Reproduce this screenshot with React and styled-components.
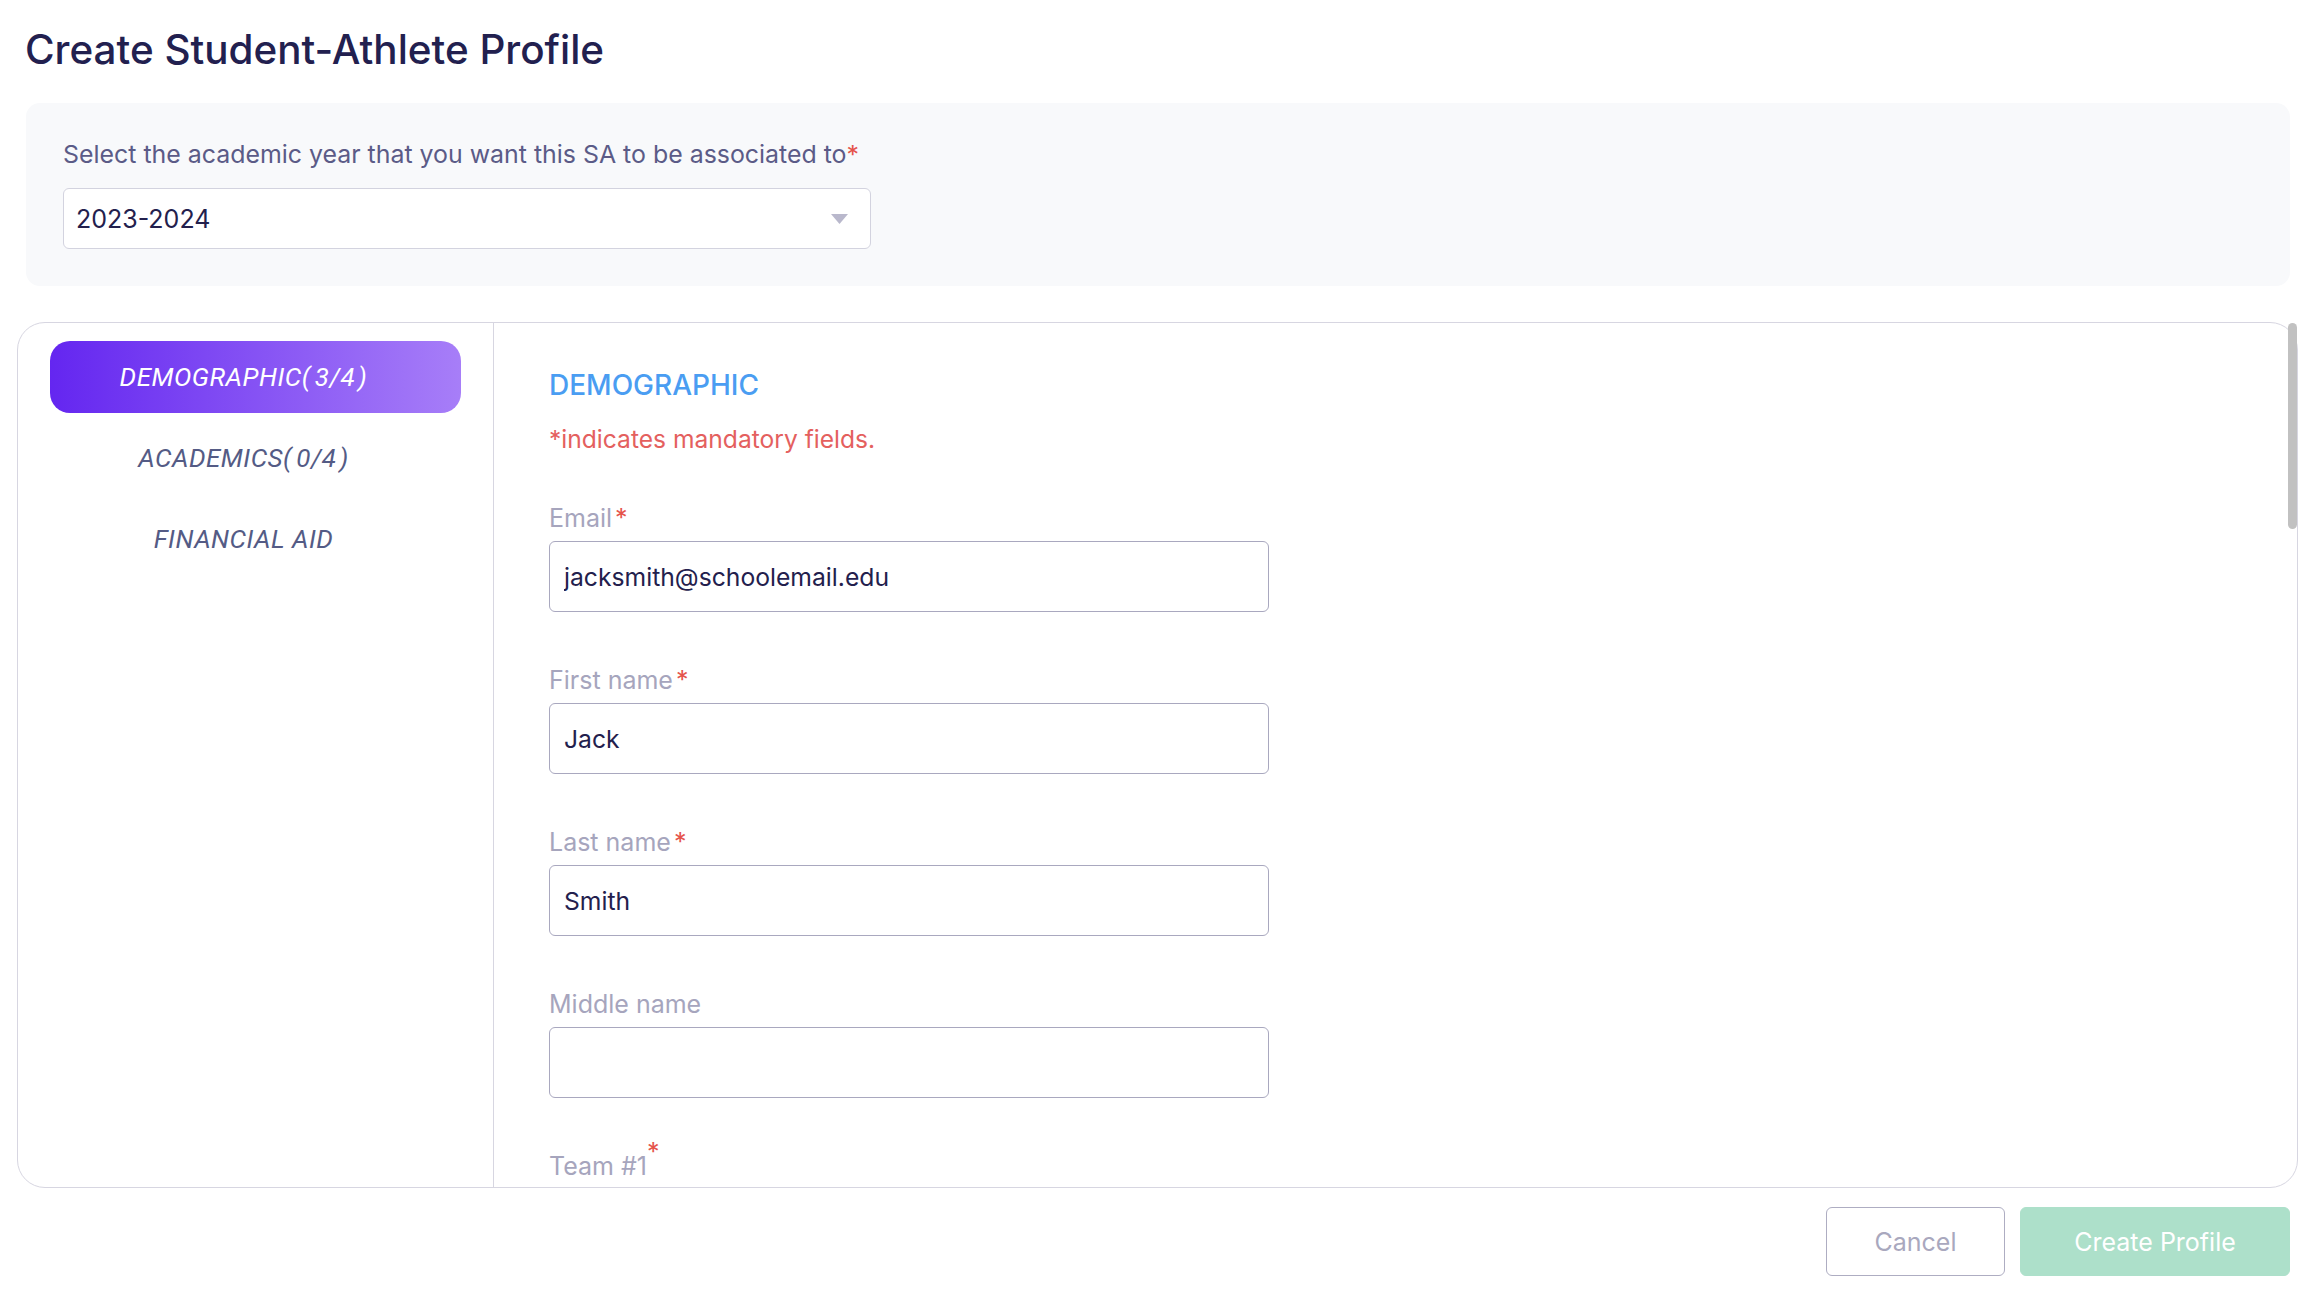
import styled, { createGlobalStyle } from "styled-components";

const GlobalStyle = createGlobalStyle`
  * { box-sizing: border-box; }
  body {
    margin: 0;
    background: #ffffff;
    font-family: Inter, "Noto Sans", sans-serif;
  }
`;

const Page = styled.div`
  height: 100vh;
  overflow: hidden;
  display: flex;
  flex-direction: column;
  padding-top: 25px;
`;

const Title = styled.h1`
  margin: 0 0 28px 25px;
  font-size: 40.4px;
  line-height: 50px;
  font-weight: 500;
  color: #22204f;
`;

const YearPanel = styled.div`
  margin: 0 34px 36px 26px;
  padding: 36px 37px 37px;
  background: #f8f9fb;
  border-radius: 14px;
`;

const PanelLabel = styled.div`
  font-size: 24.9px;
  line-height: 30px;
  color: #5b5b87;
  margin-bottom: 19px;
`;

const Star = styled.span`
  color: #e5534b;
  margin-left: ${(p) => (p.tight ? "0" : "3px")};
  position: ${(p) => (p.raised ? "relative" : "static")};
  top: ${(p) => (p.raised ? "-14px" : "0")};
`;

const SelectBox = styled.div`
  width: 808px;
  height: 61px;
  background: #ffffff;
  border: 1px solid #d3d3df;
  border-radius: 6px;
  display: flex;
  align-items: center;
  justify-content: space-between;
  padding: 0 22px 0 12px;
  font-size: 25px;
  color: #23204d;
`;

const Card = styled.div`
  position: relative;
  margin: 0 26px 0 17px;
  height: 866px;
  border: 1px solid #d7d6e1;
  border-radius: 28px;
  display: flex;
`;

const Sidebar = styled.nav`
  width: 476px;
  flex-shrink: 0;
  border-right: 1px solid #d7d6e1;
  padding: 18px 32px;
  display: flex;
  flex-direction: column;
  gap: 9px;
`;

const Tab = styled.div`
  height: 72px;
  border-radius: 20px;
  display: flex;
  align-items: center;
  justify-content: center;
  padding-right: 24px;
  font-family: Roboto, "Liberation Sans", sans-serif;
  font-style: italic;
  font-size: 26px;
  letter-spacing: 0.5px;
  color: ${(p) => (p.active ? "#ffffff" : "#545b85")};
  background: ${(p) =>
    p.active ? "linear-gradient(90deg, #6426f0 0%, #a77ef8 100%)" : "transparent"};
`;

const Count = styled.span`
  padding: 0 3px 0 4px;
`;

const Pane = styled.div`
  flex: 1;
  height: 100%;
  overflow: hidden;
  padding: 45px 56px 50px 55px;
  border-radius: 0 28px 28px 0;
`;

const ScrollThumb = styled.div`
  position: absolute;
  top: 0;
  right: 0;
  width: 9px;
  height: 206px;
  border-radius: 5px;
  background: #c1c1c1;
`;

const SectionTitle = styled.h2`
  margin: 0 0 22px;
  font-size: 28px;
  line-height: 34px;
  font-weight: 500;
  color: #4a9df2;
`;

const Mandatory = styled.p`
  margin: 0 0 49px;
  font-size: 24.6px;
  line-height: 30px;
  color: #e4605e;
`;

const Field = styled.div`
  margin-bottom: 53px;
`;

const Label = styled.label`
  display: block;
  font-size: 25px;
  line-height: 30px;
  color: #a6a5bd;
  margin-bottom: 8px;
`;

const Input = styled.input`
  display: block;
  width: 720px;
  height: 71px;
  border: 1px solid #a9a8bf;
  border-radius: 6px;
  padding: 0 14px;
  font-family: inherit;
  font-size: 24.7px;
  color: #23204d;
  background: #ffffff;
  outline: none;
`;

const Footer = styled.div`
  display: flex;
  justify-content: flex-end;
  gap: 15px;
  margin: 19px 34px 0 0;
`;

const Button = styled.button`
  height: 69px;
  width: ${(p) => (p.primary ? "270px" : "179px")};
  border-radius: 6px;
  border: 1px solid ${(p) => (p.primary ? "#ade0ca" : "#aeadc2")};
  background: ${(p) => (p.primary ? "#ade0ca" : "#ffffff")};
  color: ${(p) => (p.primary ? "#ffffff" : "#a9a8be")};
  font-family: inherit;
  font-size: 25px;
  cursor: pointer;
`;

const Caret = () => (
  <svg width="17" height="10" viewBox="0 0 17 10">
    <path d="M0 0 H17 L8.5 10 Z" fill="#b9b8cc" />
  </svg>
);

const tabs = [
  { id: "demo", name: "DEMOGRAPHIC", count: "3/4", active: true },
  { id: "acad", name: "ACADEMICS", count: "0/4" },
  { id: "fin", name: "FINANCIAL AID" },
];

const fields = [
  { label: "Email", required: true, value: "jacksmith@schoolemail.edu" },
  { label: "First name", required: true, value: "Jack" },
  { label: "Last name", required: true, value: "Smith" },
  { label: "Middle name", value: "" },
  { label: "Team #1", required: true, raised: true, value: "" },
];

const App = () => {
  return (
    <>
      <GlobalStyle />
      <Page>
        <Title>Create Student-Athlete Profile</Title>

        <YearPanel>
          <PanelLabel>
            Select the academic year that you want this SA to be associated to
            <Star tight>*</Star>
          </PanelLabel>
          <SelectBox>
            <span>2023-2024</span>
            <Caret />
          </SelectBox>
        </YearPanel>

        <Card>
          <Sidebar>
            {tabs.map((t) => (
              <Tab key={t.id} active={t.active}>
                {t.name}
                {t.count && (
                  <>
                    (<Count>{t.count}</Count>)
                  </>
                )}
              </Tab>
            ))}
          </Sidebar>

          <Pane>
            <SectionTitle>DEMOGRAPHIC</SectionTitle>
            <Mandatory>*indicates mandatory fields.</Mandatory>
            {fields.map((f) => (
              <Field key={f.label}>
                <Label>
                  {f.label}
                  {f.required && (
                    <Star raised={f.raised} tight={f.raised}>
                      *
                    </Star>
                  )}
                </Label>
                <Input defaultValue={f.value} />
              </Field>
            ))}
          </Pane>
          <ScrollThumb />
        </Card>

        <Footer>
          <Button>Cancel</Button>
          <Button primary>Create Profile</Button>
        </Footer>
      </Page>
    </>
  );
};

export default App;
